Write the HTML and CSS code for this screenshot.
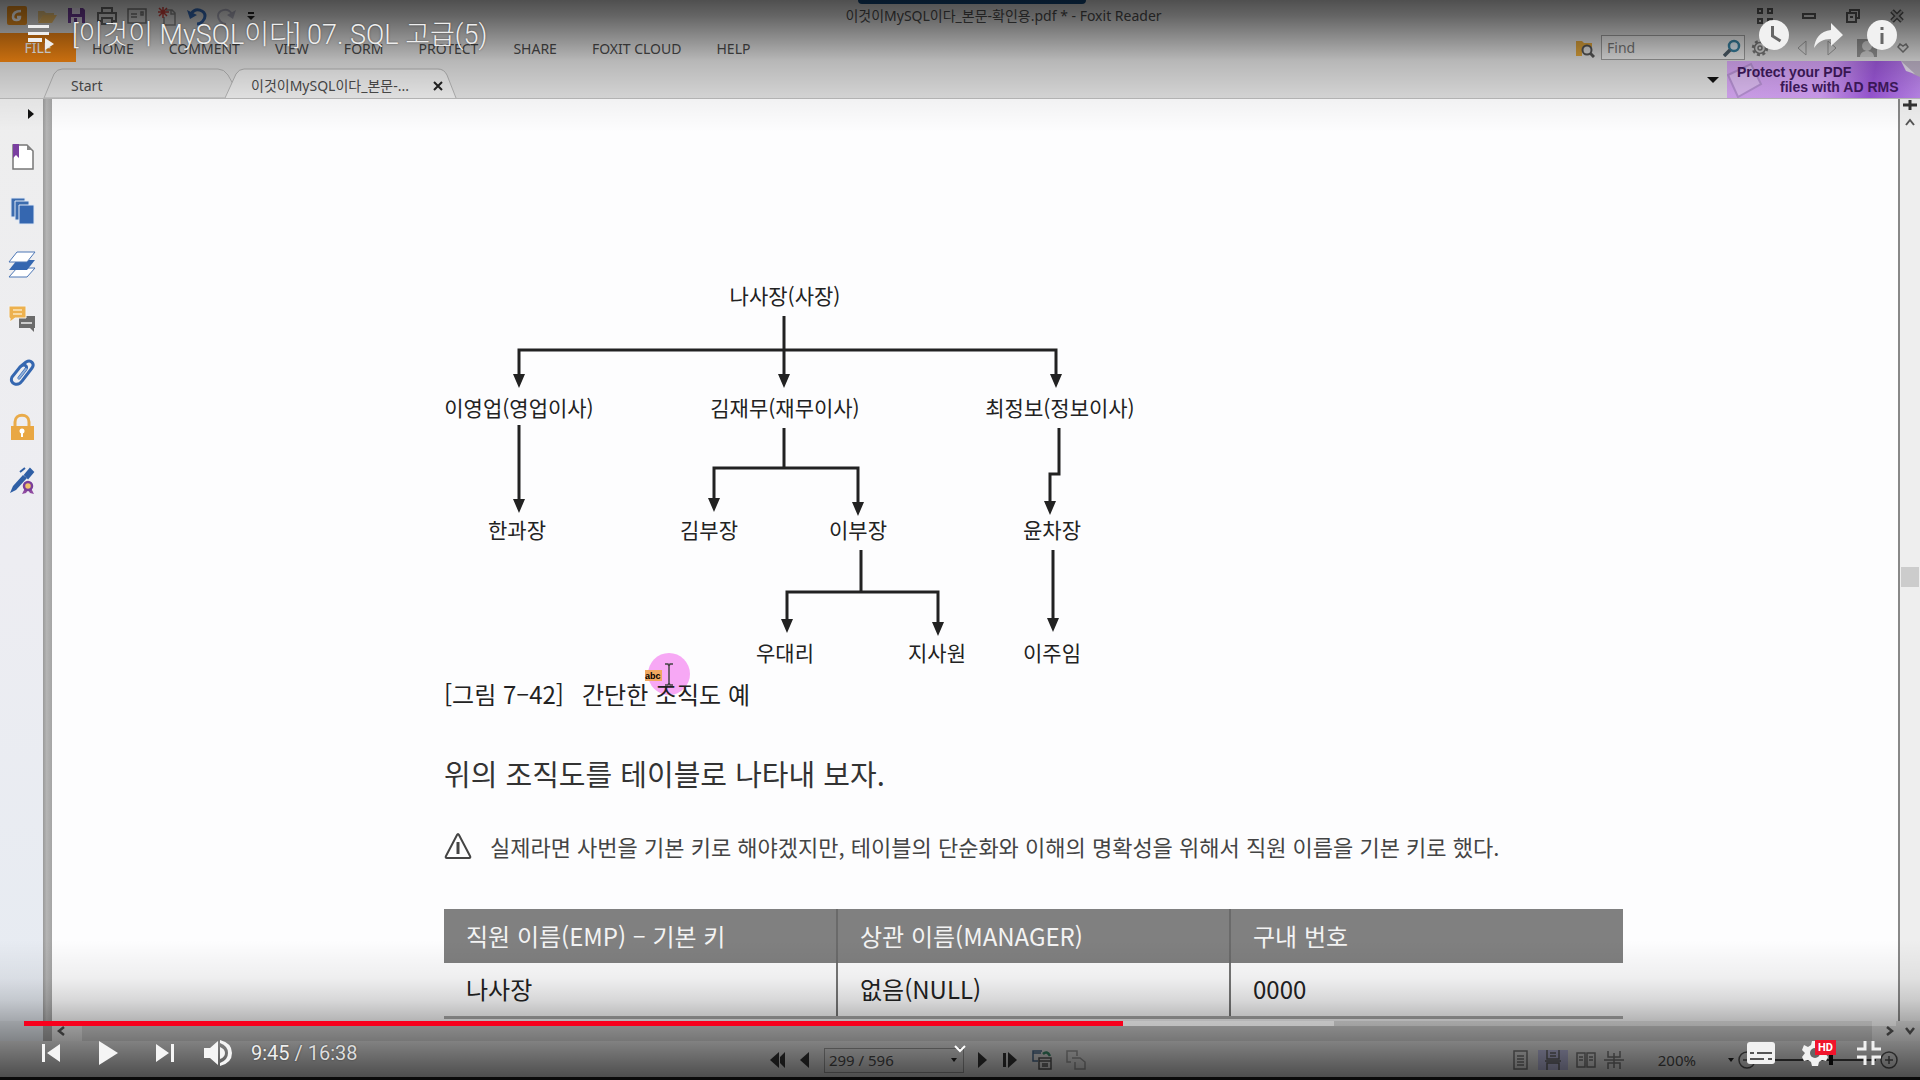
FILE: index.html
```html
<!DOCTYPE html>
<html lang="ko">
<head>
<meta charset="utf-8">
<meta name="viewport" content="width=device-width, initial-scale=1">
<title>[이것이 MySQL이다] 07. SQL 고급(5)</title>
<link rel="stylesheet" href="styles.css">
</head>
<body>
<div class="stage">
  <div class="app">
    <header class="titlebar">
      <div class="quick">
        <svg width="20" height="20" viewBox="0 0 20 20"><rect width="20" height="19" rx="2" fill="#e08a1e"/><path d="M14 5c-6 0-8 3-8 6 0 4 7 4 7 0h-3" fill="none" stroke="#fff" stroke-width="2.5"/></svg>
        <svg width="20" height="20" viewBox="0 0 20 20"><path d="M1 16V5h6l2 2h8v3H6z" fill="#d9b878"/><path d="M1 17l5-8h14l-5 8z" fill="#e8b964"/></svg>
        <svg width="20" height="20" viewBox="0 0 20 20"><path d="M1 2h15l2 2v13H1z" fill="#6d3b94"/><path d="M5 2h8v6H5zM4 11h11v6H4z" fill="#e4dcec"/><path d="M7 12h3v5H7z" fill="#6d3b94"/></svg>
        <svg width="20" height="20" viewBox="0 0 20 20" fill="none" stroke="#666" stroke-width="2"><path d="M5 7V2h10v5M4 15H1V7h18v8h-3M5 12h10v6H5z"/></svg>
        <svg width="20" height="20" viewBox="0 0 20 20" fill="none" stroke="#777" stroke-width="1.5"><path d="M1 3h18v14H1zM4 8h6M4 11h6M14 6h2v3h-2z"/></svg>
        <svg width="20" height="20" viewBox="0 0 20 20" fill="none"><path d="M9 4h6l3 3v12H7V11M14 4v4h4" stroke="#888" stroke-width="1.5"/><path d="M6 1v11M1 6h11M2 2l8 8M10 2l-8 8" stroke="#c8423c" stroke-width="1.5"/></svg>
        <svg width="20" height="20" viewBox="0 0 20 20"><path d="M4 8c5-8 14-3 14 2 0 4-4 8-8 8" fill="none" stroke="#3467b0" stroke-width="3"/><path d="M0 4l3 9 7-4z" fill="#3467b0"/></svg>
        <svg width="20" height="20" viewBox="0 0 20 20"><path d="M15 8C10 0 1 5 1 10c0 4 4 8 8 8" fill="none" stroke="#a7a7b6" stroke-width="2"/><path d="M19 4l-3 9-6-4z" fill="#a7a7b6"/></svg>
        <svg width="8" height="10" viewBox="0 0 8 10"><path d="M1 1h6v2H1zM0 5h8l-4 4z" fill="#222"/></svg>
      </div>
      <span class="notch"></span>
      <h1 class="window-title">이것이MySQL이다_본문-확인용.pdf * - Foxit Reader</h1>
      <div class="window-buttons">
        <svg width="18" height="18" viewBox="0 0 18 18" fill="none" stroke="#555" stroke-width="2"><path d="M2 2h4v4H2zM12 2h4v4h-4zM2 12h4v4H2zM12 12h4v4h-4z"/></svg>
        <svg width="18" height="18" viewBox="0 0 18 18" fill="none" stroke="#555" stroke-width="2"><path d="M3 7h12v4H3z"/></svg>
        <svg width="18" height="18" viewBox="0 0 18 18" fill="none" stroke="#555" stroke-width="2"><path d="M6 6V3h9v8h-3M3 6h9v9H3zM6 10h3"/></svg>
        <svg width="18" height="18" viewBox="0 0 18 18" fill="none"><path d="M4 4l10 10M14 4L4 14" stroke="#555" stroke-width="5"/><path d="M4 4l10 10M14 4L4 14" stroke="#bbb" stroke-width="2"/></svg>
      </div>
    </header>

    <nav class="ribbon">
      <button class="file" type="button">FILE</button>
      <div class="menus">
        <button type="button">HOME</button>
        <button type="button">COMMENT</button>
        <button type="button">VIEW</button>
        <button type="button">FORM</button>
        <button type="button">PROTECT</button>
        <button type="button">SHARE</button>
        <button type="button">FOXIT CLOUD</button>
        <button type="button">HELP</button>
      </div>
      <div class="finder">
        <svg width="20" height="20" viewBox="0 0 20 20"><path d="M1 18V3h6l2 2h8v4H7v9z" fill="#dba23c"/><circle cx="12" cy="12" r="4.5" fill="#ddd" stroke="#555" stroke-width="2"/><path d="M15 15l4 4" stroke="#555" stroke-width="3"/></svg>
        <label class="find"><input type="text" placeholder="Find" aria-label="Find">
          <svg width="18" height="18" viewBox="0 0 18 18" fill="none"><circle cx="11" cy="7" r="5" fill="#dce8f0" stroke="#38809f" stroke-width="2.5"/><path d="M7 11l-6 6" stroke="#4a5a66" stroke-width="3.5"/></svg>
        </label>
        <svg width="18" height="18" viewBox="0 0 18 18" fill="none" stroke="#777"><circle cx="9" cy="9" r="7" stroke-width="2.5" stroke-dasharray="3 2.5"/><circle cx="9" cy="9" r="5.5" stroke-width="1.5"/><circle cx="9" cy="9" r="2" stroke-width="1.5"/></svg>
      </div>
      <div class="history">
        <svg width="10" height="16" viewBox="0 0 10 16"><path d="M9 1v14L1 8z" fill="none" stroke="#999"/></svg>
        <svg width="10" height="16" viewBox="0 0 10 16"><path d="M1 1v14l8-7z" fill="none" stroke="#999"/></svg>
        <svg width="20" height="20" viewBox="0 0 20 20"><path d="M0 1h20v18H0z" fill="#909090"/><circle cx="10" cy="8" r="5" fill="#ccc"/><path d="M3 19c0-8 14-8 14 0z" fill="#ccc"/></svg>
        <svg width="12" height="10" viewBox="0 0 12 10"><path d="M6 9L1 4l2-3 3 2 3-2 2 3z" fill="none" stroke="#777" stroke-width="1.5"/></svg>
      </div>
    </nav>

    <div class="doctabs">
      <button class="tab tab-start" type="button"><svg class="tab-shape" viewBox="0 0 190 30" preserveAspectRatio="none"><path d="M1 30L11 6q3-5 8-5h156q6 0 10 6l5 9v14z" fill="#dcdcdc" stroke="#b0b0b0"/></svg><span>Start</span></button>
      <button class="tab tab-doc" type="button"><svg class="tab-shape" viewBox="0 0 232 30" preserveAspectRatio="none"><path d="M0 30L11 6q3-5 8-5h194q6 0 9 6l9 23" fill="#e9e9e9" stroke="#b0b0b0"/></svg><span>이것이MySQL이다_본문-...</span><svg class="tab-close" width="10" height="18" viewBox="0 0 10 18"><path d="M1 8l8 8M9 8L1 16" stroke="#222" stroke-width="2"/></svg></button>
      <div class="promo-wrap">
        <svg width="12" height="6" viewBox="0 0 12 6"><path d="M0 0h12L6 6z" fill="#111"/></svg>
        <a class="promo" href="#"><svg class="promo-art" viewBox="0 0 193 37" preserveAspectRatio="none"><path d="M1 14L24 3l10 20-23 13z" fill="#d9b8ee" stroke="#b48fd0" stroke-width="2"/><path d="M174 0h19v16l-7-3z" fill="#b9aec2"/><path d="M174 0l5 10 9 3z" fill="#e4dcea"/></svg><span>Protect your PDF</span><span class="promo-second">files with AD RMS</span></a>
      </div>
    </div>

    <div class="workspace">
      <aside class="side">
        <svg class="expand" width="6" height="10" viewBox="0 0 6 10"><path d="M0 0l6 5-6 5z" fill="#111"/></svg>
        <svg width="28" height="28" viewBox="0 0 28 28"><path d="M5 2h14l6 6v18H5z" fill="#fff" stroke="#777" stroke-width="1.5"/><path d="M19 2v5h5z" fill="#888"/><path d="M5 1h6v14l-3-3-3 3z" fill="#7a3fa0"/></svg>
        <svg width="28" height="28" viewBox="0 0 28 28" stroke="#dfe8f5"><path d="M3 1h14v19H3z" fill="#3c6cae"/><path d="M7 4h14v19H7z" fill="#3c6cae"/><path d="M11 8h15v19H11z" fill="#3567b0"/></svg>
        <svg width="28" height="28" viewBox="0 0 28 28"><path d="M9 17h18l-8 9H1z" fill="#fff" stroke="#4c76b5"/><path d="M9 9h18l-8 10H1z" fill="#3567b0"/><path d="M9 1h18l-8 10H1z" fill="#fff" stroke="#4c76b5"/></svg>
        <svg width="28" height="28" viewBox="0 0 28 28"><path d="M11 11h16v12h-1v4l-4-4H11z" fill="#6b6b6b"/><path d="M13 18h11" stroke="#ccc" stroke-width="2"/><path d="M1 1h17v12H7l-5 4v-4H1z" fill="#edb14e" stroke="#f3f3f3"/><path d="M5 5h9M5 9h9" stroke="#fbe6bd" stroke-width="1.5"/></svg>
        <svg width="28" height="28" viewBox="0 0 28 28" fill="none" stroke-linecap="round"><path d="M12 8l6-5c5-3 9 2 6 6L14 22c-4 6-13 3-10-4l8-10c4-4 8-1 6 2l-7 9" stroke="#3567b0" stroke-width="3"/><path d="M11 19l7-9" stroke="#8fb0dc" stroke-width="2"/></svg>
        <svg width="28" height="28" viewBox="0 0 28 28"><path d="M7 14V9c0-9 14-9 14 0v5" fill="none" stroke="#e9ab4a" stroke-width="3"/><path d="M3 13h23v14H3z" fill="#e9a743"/><circle cx="14" cy="18" r="2.5" fill="#fff"/><path d="M13 18h2v6h-2z" fill="#fff"/></svg>
        <svg width="28" height="28" viewBox="0 0 28 28" fill="none"><path d="M2 26l3-7L15 8l4 3L8 23z" fill="#2f5fa5"/><path d="M12 5l5-4M17 8l5-6 3 3-5 6z" stroke="#2f5fa5" stroke-width="2" fill="#2f5fa5"/><path d="M17 21l-3 6 4-1 2-3 2 3 4 1-3-6" fill="#8f4aa0"/><circle cx="20" cy="19" r="4" fill="#f1c36a" stroke="#7a3f9a" stroke-width="2.5"/></svg>
      </aside>
      <div class="splitter"></div>
      <main class="page">
        <article class="doc">
          <figure class="figure">
            <svg class="chart" width="720" height="390" viewBox="444 280 720 390">
              <g class="edges">
                <path d="M784 316V380M519 380V350H1056V380"/>
                <path d="M519 425V505M784 428V468M714 505V468H858V508M1059 428V474H1050V508"/>
                <path d="M861 550V592M787 625V592H938V628M1053 550V625"/>
              </g>
              <g class="tips">
                <path d="M513 374h12l-6 14zM778 374h12l-6 14zM1050 374h12l-6 14z"/>
                <path d="M513 499h12l-6 14zM708 498h12l-6 14zM852 502h12l-6 14zM1044 501h12l-6 14z"/>
                <path d="M781 619h12l-6 14zM932 622h12l-6 14zM1047 618h12l-6 14z"/>
              </g>
              <g class="names">
                <text x="785" y="304">나사장(사장)</text>
                <text x="519" y="416">이영업(영업이사)</text>
                <text x="785" y="416">김재무(재무이사)</text>
                <text x="1060" y="416">최정보(정보이사)</text>
                <text x="517" y="538">한과장</text>
                <text x="709" y="538">김부장</text>
                <text x="858" y="538">이부장</text>
                <text x="1052" y="538">윤차장</text>
                <text x="785" y="661">우대리</text>
                <text x="937" y="661">지사원</text>
                <text x="1052" y="661">이주임</text>
              </g>
            </svg>
            <svg class="pointer" width="46" height="44" viewBox="0 0 46 44"><circle cx="25" cy="22" r="21" fill="#f7a8f5"/><rect x="1" y="18" width="17" height="11" fill="#f0a860"/><text x="1" y="27">abc</text><path d="M21 12h3l1 2 1-2h3M25 13v19M21 33h3l1-2 1 2h3" fill="none" stroke="#444" stroke-width="1.5"/></svg>
            <figcaption><span>[그림 7–42]</span><span>간단한 조직도 예</span></figcaption>
          </figure>
          <p class="body">위의 조직도를 테이블로 나타내 보자.</p>
          <p class="note"><svg width="28" height="28" viewBox="0 0 28 28" fill="none" stroke="#444"><path d="M13 3L2 24q-1 2 1 2h22q2 0 1-2L15 3q-1-2-2 0z" stroke-width="2"/><path d="M14 10v12" stroke-width="3"/></svg><span>실제라면 사번을 기본 키로 해야겠지만, 테이블의 단순화와 이해의 명확성을 위해서 직원 이름을 기본 키로 했다.</span></p>
          <table class="emp">
            <thead><tr><th scope="col">직원 이름(EMP) – 기본 키</th><th scope="col">상관 이름(MANAGER)</th><th scope="col">구내 번호</th></tr></thead>
            <tbody><tr><td>나사장</td><td>없음(NULL)</td><td>0000</td></tr></tbody>
          </table>
        </article>
      </main>
      <div class="vscroll">
        <svg width="14" height="10" viewBox="0 0 14 10"><path d="M0 5h14" stroke="#333" stroke-width="3"/><path d="M7 0v10" stroke="#333" stroke-width="3"/></svg>
        <svg width="10" height="8" viewBox="0 0 10 8"><path d="M1 7l4-5 4 5" fill="none" stroke="#555" stroke-width="2"/></svg>
        <span class="vthumb"></span>
      </div>
    </div>

    <div class="hscroll">
      <span class="hleft"></span><span class="hsplit"></span>
      <svg width="30" height="10" viewBox="0 0 30 10"><path d="M12 1L7 5l5 4" fill="none" stroke="#555" stroke-width="2.5"/></svg>
      <span class="htrack"></span>
      <svg width="48" height="10" viewBox="0 0 48 10" fill="none" stroke="#555" stroke-width="2.5"><path d="M15 1l5 4-5 4M34 2l4 5 4-5"/></svg>
    </div>

    <footer class="status">
      <div class="pager">
        <svg width="16" height="16" viewBox="0 0 16 16"><path d="M9 0v16L0 8zM15 0v16l-5-5V5z" fill="#333"/></svg>
        <svg width="10" height="16" viewBox="0 0 10 16"><path d="M9 0v16L0 8z" fill="#333"/></svg>
        <label class="pagebox"><input type="text" value="299 / 596" aria-label="Page"><svg width="6" height="4" viewBox="0 0 6 4"><path d="M0 0h6L3 4z" fill="#222"/></svg></label>
        <svg width="10" height="16" viewBox="0 0 10 16"><path d="M0 0v16l9-8z" fill="#333"/></svg>
        <svg width="16" height="16" viewBox="0 0 16 16"><path d="M6 0v16l9-8zM1 1h3v14H1z" fill="#333"/></svg>
        <svg width="20" height="20" viewBox="0 0 20 20" fill="none" stroke="#555" stroke-width="1.5"><path d="M6 11H1V1h9M1 3h8" stroke="#4a6a8a"/><path d="M7 8h12v11H7zM7 11h12M10 14h6M10 16h6"/><path d="M11 4q4-4 7 2" stroke="#3a8a6a" stroke-width="2.5"/></svg>
        <svg width="20" height="20" viewBox="0 0 20 20" fill="none" stroke="#999" stroke-width="1.5"><path d="M5 12H1V1h10v5M6 8h8l5 4v7H9v-7"/></svg>
      </div>
      <div class="views">
        <svg width="20" height="20" viewBox="0 0 20 20" fill="none" stroke="#777" stroke-width="1.5"><path d="M4 1h13v18H4zM7 6h7M7 9h7M7 12h7M7 15h7"/></svg>
        <span class="view-on"><svg width="16" height="20" viewBox="0 0 16 20" fill="none" stroke="#666" stroke-width="1.5"><path d="M2 0v9h12V0M0 11h16M2 20v-7h12v7M5 3h6M5 6h6"/></svg></span>
        <svg width="20" height="20" viewBox="0 0 20 20" fill="none" stroke="#777" stroke-width="1.5"><path d="M1 3h8v14H1zM11 3h8v14h-8zM3 7h4M3 10h4M13 7h4M13 10h4"/></svg>
        <svg width="20" height="20" viewBox="0 0 20 20" fill="none" stroke="#777" stroke-width="1.5"><path d="M4 1v6h12V1M0 10h20M4 19v-6h12v6M10 3v15"/></svg>
      </div>
      <span class="zoomtext">200%</span>
      <div class="zoomer">
        <svg width="6" height="4" viewBox="0 0 6 4"><path d="M0 0h6L3 4z" fill="#222"/></svg>
        <svg width="18" height="18" viewBox="0 0 18 18" fill="none" stroke="#555" stroke-width="1.5"><circle cx="9" cy="9" r="8"/><path d="M5 9h8"/></svg>
        <input class="zoom" type="range" min="0" max="100" value="62" aria-label="Zoom">
        <svg width="18" height="18" viewBox="0 0 18 18" fill="none" stroke="#555" stroke-width="1.5"><circle cx="9" cy="9" r="8"/><path d="M5 9h8M9 5v8"/></svg>
      </div>
    </footer>
  </div>

  <div class="player">
    <div class="shade shade-top"></div>
    <div class="shade shade-bottom"></div>
    <div class="player-top">
      <button class="playlist" type="button" aria-label="Playlist"><svg width="28" height="28" viewBox="0 0 28 28" fill="#eee"><path d="M1 1h21v3H1zM1 8h21v3H1zM1 14h14v4H1zM18 14l9 6-9 6z"/></svg></button>
      <h2>[이것이 MySQL이다] 07. SQL 고급(5)</h2>
      <div class="player-actions">
        <button type="button" aria-label="Watch later"><svg width="32" height="32" viewBox="0 0 32 32"><circle cx="16" cy="16" r="15" fill="#f1f1f1"/><path d="M14.500 7v10l8 5" fill="none" stroke="#666" stroke-width="3"/></svg></button>
        <button type="button" aria-label="Share"><svg width="32" height="32" viewBox="0 0 32 32"><path d="M19 4l12 12-12 11v-7c-8 0-13 3-17 9 1-9 6-17 17-18z" fill="#f1f1f1"/></svg></button>
        <button type="button" aria-label="Info"><svg width="32" height="32" viewBox="0 0 32 32"><circle cx="16" cy="16" r="15" fill="#f1f1f1"/><path d="M14.500 14h3v11h-3zM14.500 8h3v3h-3z" fill="#666"/></svg></button>
      </div>
    </div>
    <div class="player-bottom">
      <input class="seek" type="range" min="0" max="998" value="585" aria-label="Seek">
      <div class="controls">
        <button type="button" aria-label="Previous"><svg width="28" height="28" viewBox="0 0 28 28" fill="#f5f5f5"><path d="M5 5h3v18H5zM23 5v18L10 14z"/></svg></button>
        <button type="button" aria-label="Play"><svg width="28" height="28" viewBox="0 0 28 28" fill="#f5f5f5"><path d="M5 2v24l19-12z"/></svg></button>
        <button type="button" aria-label="Next"><svg width="28" height="28" viewBox="0 0 28 28" fill="#f5f5f5"><path d="M20 5h3v18h-3zM5 5v18l13-9z"/></svg></button>
        <button type="button" aria-label="Volume"><svg width="28" height="28" viewBox="0 0 28 28" fill="#f5f5f5"><path d="M0 9h6l8-7v24l-8-7H0zM16 8q5 2 5 6t-5 6zM16 1q12 3 12 13T16 27v-3q8-3 8-10T16 4z"/></svg></button>
        <span class="time">9:45 <span>/ 16:38</span></span>
        <div class="controls-right">
          <button type="button" aria-label="Subtitles"><svg width="28" height="28" viewBox="0 0 28 28"><rect y="3" width="28" height="22" rx="3" fill="#f1f1f1"/><path d="M3 14h4M10 14h15M3 20h14M21 20h4" stroke="#555" stroke-width="2"/></svg></button>
          <button class="settings" type="button" aria-label="Settings"><svg width="28" height="28" viewBox="0 0 28 28"><path d="M11 2h6l1 4 3 2 4-2 2 5-3 3 3 4-2 4-4-1-3 2-1 4h-6l-1-4-3-2-4 1-2-4 3-4-3-3 2-5 4 2 3-2z" fill="#f1f1f1"/><circle cx="14" cy="14" r="5" fill="#666"/></svg><span class="hd">HD</span></button>
          <button type="button" aria-label="Exit full screen"><svg width="28" height="28" viewBox="0 0 28 28" fill="none" stroke="#f1f1f1" stroke-width="3"><path d="M10 2v8H2M18 2v8h8M10 26v-8H2M18 26v-8h8"/></svg></button>
        </div>
      </div>
      <svg class="more" width="14" height="10" viewBox="0 0 14 10"><path d="M2 2l5 5 5-5" fill="none" stroke="#fff" stroke-width="2"/></svg>
    </div>
  </div>
</div>
</body>
</html>
```
FILE: styles.css
```css
* { box-sizing: border-box; }
body { margin: 0; background: #0a0a0a; }
button { margin: 0; padding: 0; border: 0; background: none; font: inherit; color: inherit; }
svg { display: block; flex: none; }
.stage { position: relative; height: 100vh; min-height: 720px; padding-bottom: 3px; overflow: hidden; }
.app {
  display: flex; flex-direction: column; height: 100%;
  background: #dcdcdc; color: #4a4a4a;
  font: 14px/20px "Noto Sans", "Noto Sans CJK KR", sans-serif;
}

/* reader window */
.titlebar { position: relative; flex: none; display: flex; align-items: center; justify-content: space-between; height: 33px; padding: 0 14px 2px 7px; }
.quick { flex: 1; display: flex; align-items: center; gap: 10px; }
.notch { position: absolute; top: 0; left: 858px; width: 228px; height: 4px; border-radius: 0 0 4px 4px; background: #124678; }
.window-title { margin: 0; padding-left: 94px; font-size: 14px; font-weight: 400; }
.window-buttons { flex: 1; display: flex; justify-content: flex-end; gap: 26px; }

.ribbon { flex: none; display: flex; align-items: stretch; height: 29px; }
.file { width: 76px; background: #ef8413; color: #fff; }
.menus { flex: 1; display: flex; align-items: center; gap: 35px; padding: 2px 0 0 16px; }
.finder { display: flex; align-items: center; gap: 6px; padding-right: 28px; }
.find { display: flex; align-items: center; width: 144px; height: 25px; padding: 0 3px 0 5px; border: 1px solid #999; background: #e6e6e6; }
.find input { flex: 1; width: 0; border: 0; padding: 0; background: none; font: inherit; }
.history { display: flex; align-items: center; gap: 20px; padding: 0 11px 0 0; }

.doctabs { flex: none; display: flex; align-items: flex-end; height: 37px; border-bottom: 1px solid #bbb; padding-left: 43px; }
.tab { position: relative; display: flex; align-items: center; justify-content: space-between; height: 30px; }
.tab > span, .tab-close { position: relative; }
.tab > span { padding-top: 6px; }
.tab-shape { position: absolute; inset: 0; width: 100%; height: 100%; }
.tab-start { width: 190px; padding-left: 28px; }
.tab-doc { width: 232px; margin-left: -8px; padding: 0 14px 0 26px; }
.promo-wrap { display: flex; align-items: center; gap: 8px; margin-left: auto; }
.promo {
  position: relative; display: flex; flex-direction: column; width: 193px; height: 37px; padding: 4px 0 0 10px;
  background: linear-gradient(100deg, #d2a4ee, #cf9df0 50%, #9a56d6 75%, #bb86ea);
  color: #40195e; font: bold 14px/15px "Liberation Sans", sans-serif; text-decoration: none;
}
.promo span { position: relative; }
.promo-second { padding-left: 43px; }
.promo-art { position: absolute; inset: 0; width: 100%; height: 100%; }

.workspace { flex: 1; display: flex; min-height: 0; }
.side { flex: none; display: flex; flex-direction: column; align-items: center; gap: 26px; width: 43px; padding: 10px 0 0; background: linear-gradient(#eee, #ededf2 50%, #e6ebf2); }
.expand { margin: 0 0 -2px 18px; }
.splitter { flex: none; width: 9px; background: linear-gradient(90deg, #999, #b5b5b5 40%, #a5a5a5); }
.page { flex: 1; overflow: hidden; background: #fdfdfe; }
.doc { width: 1179px; margin: 0 0 0 392px; padding-top: 181px; color: #222; font-family: "Noto Sans CJK KR", sans-serif; }
.figure { position: relative; margin: 0; }
.edges { fill: none; stroke: #222; stroke-width: 3; }
.tips { fill: #222; }
.names { font-size: 21px; text-anchor: middle; fill: #222; }
.pointer { position: absolute; left: 200px; top: 372px; font: bold 9px "Liberation Sans", sans-serif; }
figcaption { position: relative; display: flex; gap: 18px; font-size: 24px; line-height: 48px; }
.body { margin: 30px 0 28px; font-size: 29px; line-height: 50px; color: #333; }
.note { display: flex; align-items: center; gap: 18px; margin: 0 0 43px; font-size: 22px; line-height: 40px; color: #444; white-space: nowrap; }
.emp { width: 100%; table-layout: fixed; border-collapse: collapse; font-size: 24px; line-height: 34px; }
.emp th, .emp td { height: 54px; padding: 0 22px; text-align: left; font-weight: 400; border-right: 2px solid #777; border-bottom: 3px solid #aaa; }
.emp th { background: #808080; color: #f3f3f3; border-bottom: 0; border-right-color: #6a6a6a; }
.emp th:last-child, .emp td:last-child { border-right: 0; }

.vscroll { flex: none; display: flex; flex-direction: column; align-items: center; gap: 8px; width: 22px; padding-top: 1px; border-left: 2px solid #888; background: #eee; }
.vthumb { width: 18px; height: 20px; margin-top: 433px; background: #ccc; }
.hscroll { flex: none; display: flex; align-items: center; height: 20px; background: #e2e2e2; }
.hleft { width: 43px; height: 100%; background: #dde2e8; }
.hsplit { width: 9px; height: 100%; background: #a5a5a5; }
.htrack { flex: 1; height: 100%; background: #cacaca; }

.status { flex: none; display: flex; align-items: center; height: 36px; padding: 2px 22px 0 0; background: #dedede; font-size: 15px; }
.pager { flex: 1; display: flex; align-items: center; justify-content: center; gap: 14px; padding-left: 346px; }
.pagebox { display: flex; align-items: center; width: 140px; height: 25px; padding: 0 6px 0 4px; border: 1px solid #999; }
.pagebox input { flex: 1; width: 0; padding: 0; border: 0; background: none; font: inherit; color: inherit; }
.views { display: flex; align-items: center; gap: 8px; }
.view-on { padding: 0 7px; background: #b9b9dc; }
.zoomtext { padding: 0 32px 0 34px; }
.zoomer { display: flex; align-items: center; gap: 4px; }

input[type="range"] { appearance: none; margin: 0; background: none; }
.zoom { width: 116px; height: 12px; }
.zoom::-webkit-slider-runnable-track { height: 2px; background: #444; }
.zoom::-webkit-slider-thumb { appearance: none; width: 4px; height: 10px; margin-top: -4px; background: #111; }

/* player overlay */
.player {
  position: absolute; inset: 0; display: flex; flex-direction: column; justify-content: space-between;
  color: #eee; font-family: Roboto, "Noto Sans CJK KR", sans-serif;
}
.shade { position: absolute; left: 0; right: 0; }
.shade-top { top: 0; height: 132px; background: linear-gradient(rgba(0,0,0,.64), rgba(0,0,0,.54) 12%, rgba(0,0,0,.4) 25%, rgba(0,0,0,.17) 46%, rgba(0,0,0,.05) 72%, transparent); }
.shade-bottom { bottom: 3px; height: 137px; background: linear-gradient(transparent, rgba(0,0,0,.06) 28%, rgba(0,0,0,.15) 44%, rgba(0,0,0,.28) 58%, rgba(0,0,0,.42) 74%, rgba(0,0,0,.65)); }
.player-top { position: relative; display: flex; align-items: center; padding: 18px 22px 0 27px; gap: 17px; }
.playlist { align-self: flex-end; }
.player-top h2 { flex: 1; margin: 0; font-size: 27px; line-height: 34px; font-weight: 300; text-shadow: 0 0 2px rgba(0,0,0,.5); }
.player-actions { display: flex; gap: 22px; }
.player-bottom { position: relative; padding: 0 24px 13px; }
.seek { display: block; width: 100%; height: 5px; }
.seek::-webkit-slider-runnable-track {
  height: 5px;
  background: linear-gradient(90deg, #f8001c 58.7%, rgba(255,255,255,.45) 58.7% 70%, rgba(255,255,255,.2) 70%);
}
.seek::-webkit-slider-thumb { appearance: none; width: 0; height: 5px; }
.controls { display: flex; align-items: center; height: 28px; margin-top: 13px; padding-left: 13px; }
.controls > button { margin-right: 29px; }
.controls > button:nth-of-type(3) { margin-right: 25px; }
.controls > button:nth-of-type(4) { margin-right: 19px; }
.time { font-size: 20px; line-height: 28px; text-shadow: 0 0 2px rgba(0,0,0,.5); }
.time span { color: #ddd; }
.controls-right { display: flex; gap: 26px; margin-left: auto; padding-right: 13px; }
.settings { position: relative; }
.hd { position: absolute; top: 1px; left: 14px; width: 21px; height: 15px; background: #f0142c; color: #fff; font: bold 11px/15px Roboto, sans-serif; text-align: center; }
.more { position: absolute; top: 23px; left: 50%; margin-left: -7px; }
```
